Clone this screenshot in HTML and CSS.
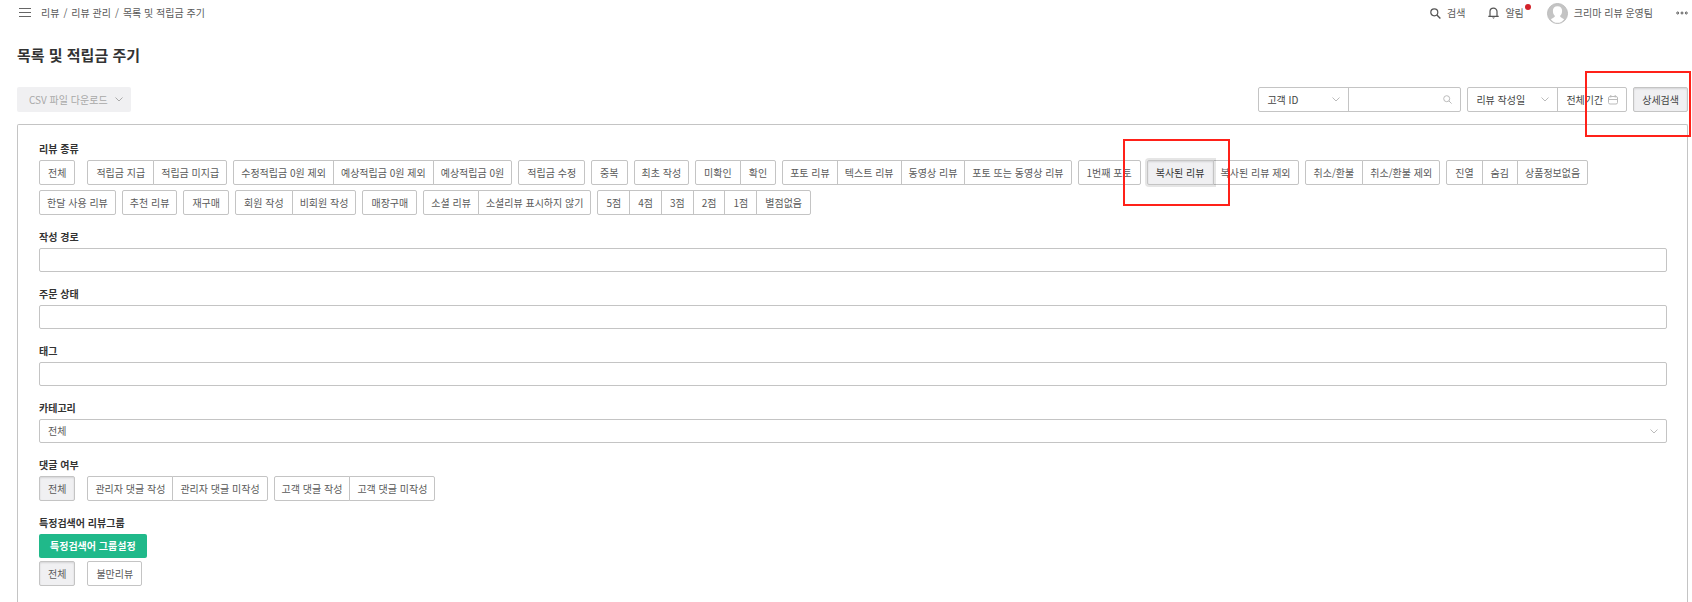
FILE: index.html
```html
<!DOCTYPE html>
<html lang="ko">
<head>
<meta charset="utf-8">
<title>목록 및 적립금 주기</title>
<meta name="viewport" content="width=device-width, initial-scale=1">
<link rel="stylesheet" href="styles.css">
</head>
<body>
<header class="topbar">
  <button class="icon-btn menu-btn" type="button" aria-label="메뉴">
    <svg width="12" height="10" viewBox="0 0 12 10"><path d="M0 .5h12M0 4.5h12M0 8.5h12" stroke="#666" fill="none"/></svg>
  </button>
  <nav class="crumbs" aria-label="경로">
    <a href="#">리뷰</a><span>/</span><a href="#">리뷰 관리</a><span>/</span><a href="#">목록 및 적립금 주기</a>
  </nav>
  <div class="top-actions">
    <button class="icon-btn" type="button">
      <svg width="11" height="11" viewBox="0 0 11 11"><circle cx="4.3" cy="4.3" r="3.5" stroke="#555" stroke-width="1.2" fill="none"/><path d="M6.9 6.9l3.5 3.5" stroke="#555" stroke-width="1.4"/></svg>
      <span>검색</span>
    </button>
    <button class="icon-btn alarm" type="button">
      <svg width="11" height="12" viewBox="0 0 11 12"><path d="M2 9V4.6a3.5 3.5 0 0 1 7 0V9M.3 9.3h10.4" stroke="#555" stroke-width="1.2" fill="none"/><path d="M4 10.4h3L5.5 11.8z" fill="#555"/></svg>
      <span>알림<i class="dot"></i></span>
    </button>
    <button class="icon-btn user" type="button">
      <svg width="21" height="21" viewBox="0 0 21 21"><circle cx="10.5" cy="10.5" r="10" fill="#c4c4c4" stroke="#bdbdbd"/><path d="M10.5 3.2c-3 0-4.6 2-4.6 4.6 0 2.4.8 4.2 2.1 5.2-.2 1.3-1.6 1.7-4.2 3.2 1.7 2.5 4 3.6 6.7 3.600s5-1.100 6.700-3.600c-2.600-1.500-4-1.900-4.200-3.200 1.300-1 2.100-2.800 2.100-5.200 0-2.600-1.600-4.600-4.600-4.600z" fill="#fff"/></svg>
      <span>크리마 리뷰 운영팀</span>
    </button>
    <button class="icon-btn" type="button" aria-label="더보기">
      <svg width="12" height="4" viewBox="0 0 12 4"><g fill="none" stroke="#555"><circle cx="1.7" cy="2" r="1"/><circle cx="6" cy="2" r="1"/><circle cx="10.3" cy="2" r="1"/></g></svg>
    </button>
  </div>
</header>

<main class="page">
  <h1>목록 및 적립금 주기</h1>

  <div class="toolbar">
    <button class="csv" type="button" disabled>CSV 파일 다운로드
      <svg width="8" height="5" viewBox="0 0 8 5"><path d="M.5.5L4 4 7.5.5" stroke="#aaa" fill="none"/></svg>
    </button>
    <form class="filters">
      <div class="joined">
        <div class="select-box key-select">
          <select aria-label="검색 기준"><option>고객 ID</option></select>
          <svg width="8" height="5" viewBox="0 0 8 5"><path d="M.5.5L4 4 7.5.5" stroke="#bbb" fill="none"/></svg>
        </div>
        <div class="search-box">
          <input type="text" aria-label="검색어">
          <svg width="9" height="9" viewBox="0 0 9 9"><circle cx="3.7" cy="3.7" r="3" stroke="#bbb" fill="none"/><path d="M5.900 5.900l2.700 2.700" stroke="#bbb"/></svg>
        </div>
      </div>
      <div class="joined">
        <div class="select-box date-select">
          <select aria-label="날짜 기준"><option>리뷰 작성일</option></select>
          <svg width="8" height="5" viewBox="0 0 8 5"><path d="M.5.5L4 4 7.5.5" stroke="#bbb" fill="none"/></svg>
        </div>
        <button class="period" type="button">전체기간
          <svg width="10" height="10" viewBox="0 0 10 10"><path d="M2 1.500h6q1.500 0 1.500 1.500v4.500q0 1.500-1.500 1.500H2Q.5 9 .5 7.500V3Q.5 1.500 2 1.500zM.5 4.500h9M2.800 0v2.500M7.200 0v2.500" stroke="#bbb" fill="none"/></svg>
        </button>
      </div>
      <button class="btn on detail" type="button" aria-pressed="true">상세검색<i class="mark mark-detail"></i></button>
    </form>
  </div>

  <div class="panel">
    <section class="field">
      <h2>리뷰 종류</h2>
      <div class="rows">
        <div class="row">
          <div class="group all"><button class="btn short" type="button">전체</button></div>
          <div class="group"><button class="btn short" type="button">적립금 지급</button><button class="btn" type="button">적립금 미지급</button></div>
          <div class="group"><button class="btn" type="button">수정적립금 0원 제외</button><button class="btn" type="button">예상적립금 0원 제외</button><button class="btn" type="button">예상적립금 0원</button></div>
          <div class="group"><button class="btn short" type="button">적립금 수정</button></div>
          <div class="group"><button class="btn short" type="button">중복</button></div>
          <div class="group"><button class="btn" type="button">최초 작성</button></div>
          <div class="group"><button class="btn short" type="button">미확인</button><button class="btn short" type="button">확인</button></div>
          <div class="group"><button class="btn" type="button">포토 리뷰</button><button class="btn" type="button">텍스트 리뷰</button><button class="btn" type="button">동영상 리뷰</button><button class="btn" type="button">포토 또는 동영상 리뷰</button></div>
          <div class="group"><button class="btn short" type="button">1번째 포토</button></div>
          <div class="group"><button class="btn short on focus" type="button" aria-pressed="true">복사된 리뷰<i class="mark mark-copied"></i></button><button class="btn" type="button">복사된 리뷰 제외</button></div>
          <div class="group"><button class="btn short" type="button">취소/환불</button><button class="btn" type="button">취소/환불 제외</button></div>
          <div class="group"><button class="btn short" type="button">진열</button><button class="btn short" type="button">숨김</button><button class="btn" type="button">상품정보없음</button></div>
        </div>
        <div class="row">
          <div class="group"><button class="btn" type="button">한달 사용 리뷰</button></div>
          <div class="group"><button class="btn" type="button">추천 리뷰</button></div>
          <div class="group"><button class="btn short" type="button">재구매</button></div>
          <div class="group"><button class="btn short" type="button">회원 작성</button><button class="btn" type="button">비회원 작성</button></div>
          <div class="group"><button class="btn short" type="button">매장구매</button></div>
          <div class="group"><button class="btn" type="button">소셜 리뷰</button><button class="btn" type="button">소셜리뷰 표시하지 않기</button></div>
          <div class="group"><button class="btn short" type="button">5점</button><button class="btn short" type="button">4점</button><button class="btn short" type="button">3점</button><button class="btn short" type="button">2점</button><button class="btn short" type="button">1점</button><button class="btn short" type="button">별점없음</button></div>
        </div>
      </div>
    </section>

    <div class="field"><label for="route">작성 경로</label><input class="text" id="route" type="text"></div>
    <div class="field"><label for="order">주문 상태</label><input class="text" id="order" type="text"></div>
    <div class="field"><label for="tag">태그</label><input class="text" id="tag" type="text"></div>
    <div class="field">
      <label for="category">카테고리</label>
      <div class="select-box wide">
        <select id="category"><option>전체</option></select>
        <svg width="8" height="5" viewBox="0 0 8 5"><path d="M.5.5L4 4 7.5.5" stroke="#bbb" fill="none"/></svg>
      </div>
    </div>

    <section class="field">
      <h2>댓글 여부</h2>
      <div class="row">
        <div class="group all"><button class="btn short on" type="button" aria-pressed="true">전체</button></div>
        <div class="group"><button class="btn" type="button">관리자 댓글 작성</button><button class="btn" type="button">관리자 댓글 미작성</button></div>
        <div class="group"><button class="btn" type="button">고객 댓글 작성</button><button class="btn" type="button">고객 댓글 미작성</button></div>
      </div>
    </section>

    <section class="field">
      <h2>특정검색어 리뷰그룹</h2>
      <button class="primary" type="button">특정검색어 그룹설정</button>
      <div class="row">
        <div class="group all"><button class="btn short on" type="button" aria-pressed="true">전체</button></div>
        <div class="group"><button class="btn short" type="button">불만리뷰</button></div>
      </div>
    </section>
  </div>
</main>
</body>
</html>
```

FILE: styles.css
```css
* { box-sizing: border-box; }

body {
  margin: 0;
  min-height: 100vh;
  display: flex;
  flex-direction: column;
  background: #fff;
  color: #5a5a5a;
  font: 10px/14px "Noto Sans CJK KR", sans-serif;
}

button, input, select { font: inherit; color: inherit; margin: 0; }
button { cursor: pointer; white-space: nowrap; }
svg { display: block; flex: none; }

.topbar {
  display: flex;
  align-items: center;
  height: 26px;
  padding: 0 4px 0 19px;
}
.icon-btn {
  display: flex;
  align-items: center;
  gap: 6px;
  padding: 0;
  border: 0;
  background: none;
}
.crumbs { display: flex; gap: 4px; margin-left: 10px; }
.crumbs a { color: inherit; text-decoration: none; }
.top-actions { display: flex; align-items: center; gap: 23px; margin-left: auto; }
.alarm span { position: relative; }
.dot {
  position: absolute;
  top: -2px;
  right: -7px;
  width: 6px;
  height: 6px;
  border-radius: 50%;
  background: #d3222a;
}

.page {
  flex: 1;
  display: flex;
  flex-direction: column;
  padding: 17px 4px 0 17px;
}
h1 { margin: 0; font-size: 15px; line-height: 24px; font-weight: 700; color: #333; }

.toolbar {
  display: flex;
  justify-content: space-between;
  margin: 20px 0 12px;
}
.csv {
  display: flex;
  align-items: center;
  gap: 7px;
  height: 25px;
  padding: 0 8px 0 12px;
  border: 0;
  border-radius: 2px;
  background: #f0f0f2;
  color: #a8a8a8;
}
.filters { display: flex; gap: 6px; color: #444; }
.joined {
  display: flex;
  height: 25px;
  border: 1px solid #c4c4c4;
  border-radius: 2px;
}
.select-box, .search-box { display: flex; align-items: center; position: relative; }
.select-box select {
  width: 100%;
  height: 100%;
  padding: 0 24px 0 8px;
  border: 0;
  background: none;
  appearance: none;
}
.select-box svg, .search-box svg { position: absolute; right: 8px; pointer-events: none; }
.key-select, .date-select { width: 90px; border-right: 1px solid #c4c4c4; }
.search-box { width: 111px; }
.search-box input { width: 100%; height: 100%; padding: 0 24px 0 8px; border: 0; background: none; }
.period {
  display: flex;
  align-items: center;
  gap: 5px;
  padding: 0 8px;
  border: 0;
  background: none;
}

.panel {
  flex: 1;
  display: flex;
  flex-direction: column;
  gap: 15px;
  padding: 17px 20px 15px 21px;
  border: 1px solid #c4c4c4;
  border-bottom: 0;
  border-radius: 2px 2px 0 0;
}
.field { display: flex; flex-direction: column; align-items: flex-start; }
.field h2, .field label {
  margin: 0 0 4px;
  font-size: 10px;
  line-height: 14px;
  font-weight: 700;
  color: #333;
}
.text, .wide {
  width: 100%;
  height: 24px;
  border: 1px solid #c4c4c4;
  border-radius: 2px;
  background: #fff;
}
.text { padding: 0 8px; }

.rows { display: flex; flex-direction: column; gap: 5px; }
.row { display: flex; flex-wrap: wrap; gap: 5px 6px; }
.group { display: flex; }
.all { margin-right: 6px; }
.btn {
  height: 25px;
  padding: 0 7px;
  border: 1px solid #c4c4c4;
  border-radius: 0;
  background: #fff;
}
.group .btn + .btn { margin-left: -1px; }
.group .btn:first-child, .detail { border-top-left-radius: 2px; border-bottom-left-radius: 2px; }
.group .btn:last-child, .detail { border-top-right-radius: 2px; border-bottom-right-radius: 2px; }
.short, .detail { padding: 0 8px; }
.on {
  position: relative;
  background: #f0f0f2;
  box-shadow: inset 0 1px 2px rgba(0, 0, 0, .12);
}
.focus {
  z-index: 1;
  color: #333;
  box-shadow: inset 0 1px 2px rgba(0, 0, 0, .12), 0 0 0 2px rgba(0, 0, 0, .1);
}

.mark { position: absolute; z-index: 2; border: 2px solid #ff2119; pointer-events: none; }
.mark-detail { inset: -17px -4px -26px -49px; }
.mark-copied { inset: -22px -17px -22px -25px; }

.primary {
  height: 24px;
  margin-bottom: 3px;
  padding: 0 11px;
  border: 0;
  border-radius: 2px;
  background: #20b98a;
  color: #fff;
  font-weight: 700;
}
```
